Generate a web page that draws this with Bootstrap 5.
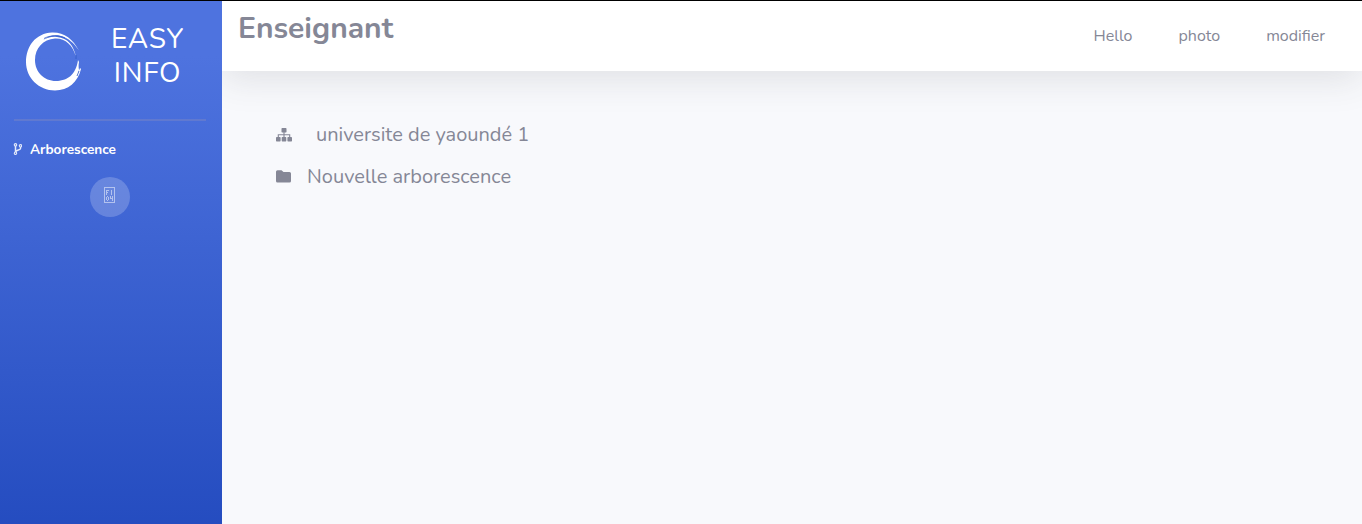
<!DOCTYPE html>
<html lang="fr">
<head>
<meta charset="utf-8">
<meta name="viewport" content="width=device-width, initial-scale=1">
<title>Easy Info</title>
<link href="https://cdn.jsdelivr.net/npm/bootstrap@5.3.0/dist/css/bootstrap.min.css" rel="stylesheet">
<style>
body{font-family:Nunito,Lato,"Open Sans",sans-serif;color:#858796;background:#f8f9fc;border-top:1px solid #000;overflow:hidden}
.sidebar{width:222px;background:linear-gradient(180deg,#4e73df 10%,#224abe 100%) 0 0/100% 552px;color:#fff;z-index:1}
.brand{height:118px;padding:21px 0 0 26px}
.brand-mark{width:56px;height:59px;margin-top:10px}
.brand-title{width:73px;margin-left:29px;font-size:28px;line-height:34px;letter-spacing:.8px;text-align:center;white-space:nowrap}
.divider{height:2px;margin:0 16px 0 14px;background:#6079d0}
.side-link{font-size:13.6px;font-weight:700;line-height:20px;padding:19px 0 0 13px}
.side-link svg{margin-bottom:2px}
.side-link span{margin-left:8px}
.toggler{width:40px;height:40px;margin:17px 0 0 90px;background:rgba(255,255,255,.2);color:rgba(255,255,255,.5)}
.topbar{height:70px;background:#fff;box-shadow:0 .5rem 2.25rem rgba(58,59,69,.13)}
.topbar h1{font-size:30px;font-weight:700;line-height:36px;padding:10px 0 0 16px;margin:0}
.topbar nav{font-size:16px;line-height:24px;padding:23px 37px 0 0;gap:46px}
.tree{padding:48px 0 0 54px;font-size:20px}
.tree li{height:30px;margin-bottom:12px}
.tree li span{padding-top:2px}
.tree-icon{margin-top:2px}
</style>
<script src="https://cdn.jsdelivr.net/npm/bootstrap@5.3.0/dist/js/bootstrap.bundle.min.js"></script>
</head>
<body>
<div class="d-flex vh-100">
  <aside class="sidebar position-relative flex-shrink-0">
    <div class="brand d-flex align-items-start">
      <svg class="brand-mark" viewBox="0 0 56 59" preserveAspectRatio="none"><path fill="#fff" fill-rule="evenodd" d="M53 18.500C47 7 38 0 26 .4C10 1 0 14 0 30C0 46 13 58.500 29 58.500C42 58.500 52 50 55 37L54 36L51 44L53 30L52 28C50 43 41 49 30 49C18 49 9 40 9 28C9 16 17 7.500 29 6.500C39 6 47 13 50 25C48 14 42 6 31 5C26 4 21 6 17 8C23 3 31 2 38 5C45 8 49 13 53 18.500Z"/><path d="M52 32C49 45 40 50 30 49L29 57C41 57 50 51 53 38Z" fill="#fff"/><path d="M18 6.500C24 3 33 3 39 6M50 23v4M51 44l2-5" fill="none" stroke="#315bc4" stroke-width=".8"/></svg>
      <div class="brand-title"><div>EASY</div><div>INFO</div></div>
    </div>
    <div class="divider"></div>
    <div class="side-link d-flex align-items-center"><svg width="9" height="12" viewBox="-.5 0 9 12" fill="none" stroke="#e4eafa" stroke-width="1.1"><circle cx="2" cy="1.800" r="1.200"/><circle cx="2" cy="10.200" r="1.200"/><circle cx="7" cy="2.800" r="1.200"/><path d="M2 3v6M7 4v1.500C7 7.500 2.500 6.500 2 9" stroke-width="1.500"/></svg><span>Arborescence</span></div>
    <div class="toggler rounded-circle">
      <svg class="d-block" width="40" height="40" viewBox="0 0 40 40" fill="none" stroke="currentColor" shape-rendering="crispEdges"><path d="M14.500 10.500h10v15h-10zM16.500 18v-5M16 13.500h3M16 15.500h2M21.500 13v5M17 19.500h1M17 23.500h1M16.500 20v3M18.500 20v3M20.500 19v3M20 21.500h3M22.500 19v5"/></svg>
    </div>
  </aside>
  <main class="flex-grow-1">
    <header class="topbar d-flex justify-content-between align-items-start">
      <h1>Enseignant</h1>
      <nav class="d-flex"><span>Hello</span><span>photo</span><span>modifier</span></nav>
    </header>
    <ul class="tree list-unstyled mb-0">
      <li class="d-flex align-items-center"><svg class="tree-icon" width="16" height="14" viewBox="0 0 16 14" fill="currentColor"><rect x="5.500" width="5" height="4.500" rx=".7"/><rect y="9" width="4.600" height="4.500" rx=".7"/><rect x="5.700" y="9" width="4.600" height="4.500" rx=".7"/><rect x="11.400" y="9" width="4.600" height="4.500" rx=".7"/><path d="M8 4v5M2.300 9V6.700h11.400V9" fill="none" stroke="currentColor" stroke-width="1.100"/></svg><span class="ms-4">universite de yaoundé 1</span></li>
      <li class="d-flex align-items-center"><svg width="15" height="13" viewBox="0 0 15 13" fill="currentColor"><path d="M1.500.3H5.500L7.500 2H13.500Q15 2 15 3.500V11Q15 12.500 13.500 12.500H1.500Q0 12.500 0 11V1.800Q0 .3 1.500.3Z"/></svg><span class="ms-3">Nouvelle arborescence</span></li>
    </ul>
  </main>
</div>
</body>
</html>
